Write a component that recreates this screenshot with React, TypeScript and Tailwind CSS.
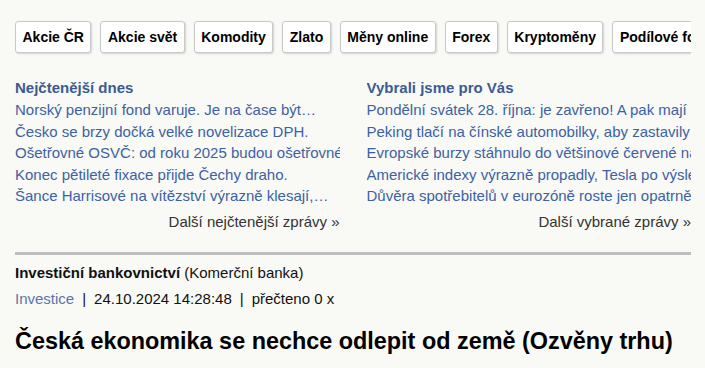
const tabs = ['Akcie ČR', 'Akcie svět', 'Komodity', 'Zlato', 'Měny online', 'Forex', 'Kryptoměny', 'Podílové fondy'];

const mostRead = [
    'Norský penzijní fond varuje. Je na čase být…',
    'Česko se brzy dočká velké novelizace DPH.',
    'Ošetřovné OSVČ: od roku 2025 budou ošetřovné dostávat i živnostníci',
    'Konec pětileté fixace přijde Čechy draho.',
    'Šance Harrisové na vítězství výrazně klesají,…',
];

const picked = [
    'Pondělní svátek 28. října: je zavřeno! A pak mají zavřeno i další burzy',
    'Peking tlačí na čínské automobilky, aby zastavily investice v Evropě',
    'Evropské burzy stáhnulo do většinové červené nálady',
    'Americké indexy výrazně propadly, Tesla po výsledcích roste',
    'Důvěra spotřebitelů v eurozóně roste jen opatrně',
];

function NewsColumn({ title, items, more }: { title: string; items: string[]; more: string }) {
    return (
        <div className="w-[325px] overflow-hidden">
            <h3 className="text-[15px] leading-[22px] font-bold text-[#3a5c94]">{title}</h3>
            <ul>
                {items.map((item) => (
                    <li key={item} className="whitespace-nowrap overflow-hidden text-[15px] leading-[21.6px] text-[#3c62a4]">
                        <a href="#">{item}</a>
                    </li>
                ))}
            </ul>
            <div className="mt-[4px] text-right text-[15px] leading-[22px] text-[#333]">
                <a href="#">{more}</a>
            </div>
        </div>
    );
}

export default function App() {
    return (
        <div className="min-h-[368px] bg-[#f9f9f5] font-['Liberation_Sans',Arial,sans-serif] text-black">
            <div className="mx-[15px] w-[676px] overflow-hidden pt-[21px]">
                {/* Tabs */}
                <div className="flex gap-[9px]">
                    {tabs.map((tab) => (
                        <button
                            key={tab}
                            className="shrink-0 h-[32px] px-[6.5px] bg-white border border-[#c8c8c8] rounded-[3px] shadow-[1px_1px_2px_rgba(0,0,0,0.15)] text-[14px] font-bold text-black whitespace-nowrap"
                        >
                            {tab}
                        </button>
                    ))}
                </div>

                {/* News columns */}
                <div className="mt-[24px] flex gap-[27px]">
                    <NewsColumn title="Nejčtenější dnes" items={mostRead} more="Další nejčtenější zprávy »" />
                    <NewsColumn title="Vybrali jsme pro Vás" items={picked} more="Další vybrané zprávy »" />
                </div>

                <div className="mt-[19px] h-[3px] bg-[#bdbdbd]" />

                {/* Article header */}
                <div className="mt-[7px] text-[15px] leading-[22px] text-[#111]">
                    <b>Investiční bankovnictví</b> (Komerční banka)
                </div>
                <div className="mt-[4px] text-[15px] leading-[22px] text-[#111]">
                    <a href="#" className="text-[#5a76a8]">Investice</a>
                    <span className="mx-[8px]">|</span>24.10.2024 14:28:48
                    <span className="mx-[8px]">|</span>přečteno 0 x
                </div>
                <h1 className="mt-[17px] text-[23.4px] leading-[28px] font-bold text-black">
                    Česká ekonomika se nechce odlepit od země (Ozvěny trhu)
                </h1>
            </div>
        </div>
    );
}
